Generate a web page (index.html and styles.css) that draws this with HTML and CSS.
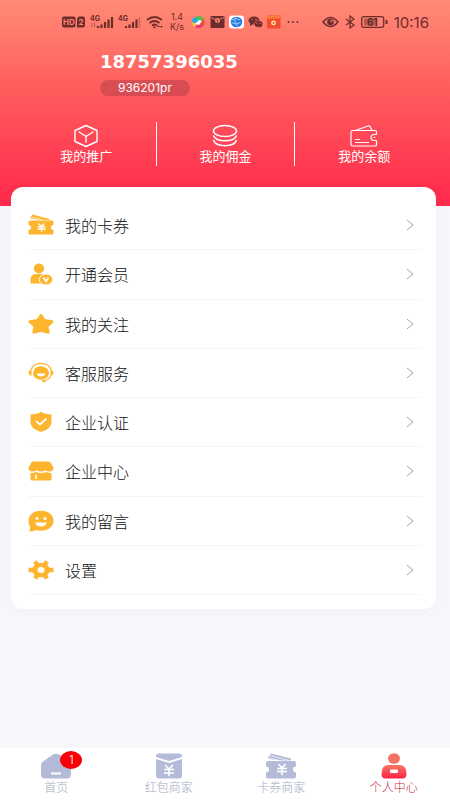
FILE: index.html
```html
<!DOCTYPE html>
<html lang="zh-CN">
<head>
<meta charset="utf-8">
<meta name="viewport" content="width=device-width, initial-scale=1">
<title>个人中心</title>
<link rel="stylesheet" href="styles.css">
</head>
<body>
<header class="header">
  <div class="status">
    <div class="status-left">
      <svg width="24" height="16" viewBox="0 0 24 16"><rect x="0" y="2.500" width="13.500" height="11" rx="2" fill="#6d2d2b"/><path d="M15 4.500l2-2h4q2 0 2 2v7q0 2-2 2h-6z" fill="#6d2d2b"/><text x="1" y="11" font-size="8" font-weight="700" fill="#ff8272">HD</text><text x="16.500" y="11" font-size="8" font-weight="700" fill="#ff8272">2</text></svg>
      <svg width="24" height="16" viewBox="0 0 24 16"><text x="0" y="7" font-size="7" font-weight="700" fill="#6d2d2b">4G</text><path d="M8 14v-2M11.500 14v-3.500M15 14V8M18.500 14V5.500M22 14V3" stroke="#6d2d2b" stroke-width="2.200"/><path d="M2 9v4M4.500 9v4" stroke="#b85850"/></svg>
      <svg width="24" height="16" viewBox="0 0 24 16"><text x="0" y="7" font-size="7" font-weight="700" fill="#6d2d2b">4G</text><path d="M8 14v-2M11.500 14v-3.500M15 14V8M18.500 14V5.500" stroke="#6d2d2b" stroke-width="2.200"/><path d="M21.500 14V3" stroke="#c96459" stroke-width="1.500"/></svg>
      <svg width="17" height="16" viewBox="0 0 17 16"><path d="M1 6Q8.500 0 16 6M3.500 9q5-4 10 0M6 11.500q2.500-2 5 0" fill="none" stroke="#6d2d2b" stroke-width="1.700"/><path d="M6.500 12.500h4l-2 2zM11 13l1.500-2 1.500 2zM14 12h3l-1.500 2z" fill="#6d2d2b"/></svg>
      <span class="speed">1.4<br>K/s</span>
      <svg width="15" height="15" viewBox="0 0 15 15"><path d="M1 7q-1-4 4-5l4 2-4 5z" fill="#2aa9df"/><path d="M5 2q5-3 8 2l-1 4-5-3z" fill="#51be48"/><path d="M13 4q2 5-2 8l-3-1 2-5z" fill="#f04a3d"/><path d="M12 11q-4 4-8 1l1-3 5 1z" fill="#e83c70"/><path d="M4 12q-3-2-3-5l5 2z" fill="#ffc629"/><path d="M4 9l4-4 3 1-3 4z" fill="#fff"/></svg>
      <svg width="15" height="14" viewBox="0 0 15 14"><rect x=".5" y="1" width="14" height="12" rx="1" fill="#6d2d2b"/><path d="M1 2.500q6 4 13 0" fill="none" stroke="#f97d6f"/><circle cx="7.500" cy="5.500" r="2.500" fill="#f97d6f"/><path d="M6.500 4.500l1 1 1-1M7.500 5.500v2" fill="none" stroke="#6d2d2b" stroke-width=".8"/></svg>
      <svg width="15" height="14" viewBox="0 0 15 14"><rect y=".5" width="15" height="13" rx="3" fill="#fff"/><ellipse cx="7.500" cy="7" rx="5.800" ry="5.200" fill="#2979df"/><path d="M3 5q4-3 8 0M2.500 7.500q4 3 9 0M7 2.500q-3 4 2 9" fill="none" stroke="#a8d3ff" stroke-width=".9"/></svg>
      <svg width="15" height="14" viewBox="0 0 15 14"><ellipse cx="6" cy="5.500" rx="5.500" ry="4" fill="#6d2d2b"/><path d="M2 8v3l3-2z" fill="#6d2d2b"/><ellipse cx="10.500" cy="9" rx="4.300" ry="3.300" fill="#6d2d2b" stroke="#ff7d6e" stroke-width=".6"/><path d="M11 11l2 2V10z" fill="#6d2d2b"/><g fill="#ff7d6e"><circle cx="4" cy="4.500" r=".7"/><circle cx="8" cy="4.500" r=".7"/><circle cx="9" cy="8.300" r=".6"/><circle cx="12" cy="8.300" r=".6"/></g></svg>
      <svg width="14" height="14" viewBox="0 0 14 14"><rect y=".5" width="13.500" height="13" rx="1" fill="#f34b2e"/><path d="M0 .5h13.500v3H0z" fill="#ff7b38"/><circle cx="6.500" cy="8" r="1.700" fill="none" stroke="#ffe2a0" stroke-width="1.500"/></svg>
      <svg class="dots" width="12" height="4" viewBox="0 0 12 4"><g fill="#6d2d2b"><circle cx="1.500" cy="2" r="1"/><circle cx="6" cy="2" r="1"/><circle cx="10.500" cy="2" r="1"/></g></svg>
    </div>
    <div class="status-right">
      <svg width="17" height="12" viewBox="0 0 17 12"><path d="M1 6q7.500-9 15 0-7.500 9-15 0z" fill="none" stroke="#6d2d2b" stroke-width="1.500"/><circle cx="8.500" cy="6" r="3.300" fill="#6d2d2b"/><circle cx="9.500" cy="5" r="1" fill="#ff8877"/></svg>
      <svg width="10" height="14" viewBox="0 0 10 14"><path d="M1 4l8 6-4 3V1l4 3-8 6" fill="none" stroke="#6d2d2b" stroke-width="1.200"/></svg>
      <svg width="27" height="12" viewBox="0 0 27 12"><rect x=".7" y=".7" width="22" height="10.600" rx="2" fill="none" stroke="#6d2d2b" stroke-width="1.300"/><rect x="3" y="2.500" width="12" height="7" fill="#b75a52"/><path d="M25.500 4v4" stroke="#6d2d2b" stroke-width="2"/><text x="6" y="9.500" font-size="10" font-weight="600" fill="#5a2422">61</text></svg>
      <time class="clock">10:16</time>
    </div>
  </div>
  <section class="profile">
    <h1 class="phone">18757396035</h1>
    <span class="code">936201pr</span>
  </section>
  <nav class="stats">
    <a class="stat" href="#"><svg width="26" height="24" viewBox="0 0 26 24"><path d="M13 1.500l11 5v11l-11 5-11-5v-11zM6 8l7 4.500L20 8M13 12.500V18" fill="none" stroke="#fff" stroke-width="1.400" stroke-linejoin="round" stroke-linecap="round"/></svg>我的推广</a>
    <a class="stat" href="#"><svg width="26" height="24" viewBox="0 0 26 24"><g fill="none" stroke="#fff" stroke-width="1.500"><ellipse cx="13" cy="7" rx="11.500" ry="5.500"/><path d="M1.500 11.500c2 7 21 7 23 0M1.500 16c2 7.500 21 7.500 23 0"/></g></svg>我的佣金</a>
    <a class="stat" href="#"><svg width="28" height="24" viewBox="0 0 28 24"><g fill="none" stroke="#fff" stroke-width="1.200" stroke-linejoin="round"><path d="M26.500 10.500V7.500Q26.500 6.500 25 6.500H2.500Q1 6.500 1 8v12.500Q1 22 2.500 22H25q1.500 0 1.500-1v-4.500M26.500 10.500H24a3 3 0 0 0 0 6h2.500M5 6.500l13-4.500q1.500-.5 2 .5l2 4M5 15.500h5M5 18.500h14"/></g><circle cx="24.500" cy="13.500" r=".8" fill="#fff"/></svg>我的余额</a>
  </nav>
</header>
<main class="card">
  <a class="row" href="#"><svg class="icon" viewBox="0 0 26 22"><path d="M2.500 4.500V3L4.500.5l17 4.500v1H13zM1 6.500h23q1.500 0 1.500 1.500v3a2.500 2.500 0 0 0 0 5v3q0 1.500-1.500 1.500H2Q.5 20.500.5 19v-3a2.500 2.500 0 0 0 0-5V8q0-1.500 1.500-1.500z" fill="#fdb52f"/><path d="M3 3l12 3" stroke="#fff" stroke-width=".6"/><path d="M10.500 9.500l3 3 3-3M9.500 12.800h8M9.500 15h8M13.500 12.500v5" fill="none" stroke="#fff" stroke-width="1.300"/></svg><span>我的卡券</span><svg class="arrow" viewBox="0 0 10 12"><path d="M2 1l6 5-6 5"/></svg></a>
  <a class="row" href="#"><svg class="icon" viewBox="0 0 26 22"><ellipse cx="11" cy="5.500" rx="5.200" ry="5" fill="#fdb52f"/><path d="M2.500 20.500v-4q0-5.500 6-5.500h5q5 0 6 4v5.500z" fill="#fdb52f"/><ellipse cx="18" cy="16.500" rx="6.800" ry="5.500" fill="#fdb52f" stroke="#fff"/><path d="M15.500 14.500l2.500 4 2.500-4" fill="none" stroke="#fff" stroke-width="1.500"/></svg><span>开通会员</span><svg class="arrow" viewBox="0 0 10 12"><path d="M2 1l6 5-6 5"/></svg></a>
  <a class="row" href="#"><svg class="icon" viewBox="0 0 26 22"><path d="M13 2.500l3.500 5 7.500 1.200-5 4.500 1.200 6-7.200-2-7.200 2 1.200-6-5-4.500 7.500-1.200z" fill="#fdb52f" stroke="#fdb52f" stroke-width="3" stroke-linejoin="round"/></svg><span>我的关注</span><svg class="arrow" viewBox="0 0 10 12"><path d="M2 1l6 5-6 5"/></svg></a>
  <a class="row" href="#"><svg class="icon" viewBox="0 0 26 22"><ellipse cx="13" cy="11" rx="8" ry="6.800" fill="#fdb52f"/><path d="M3 8C6-.8 20-.8 23 8M23 13.500Q21 18 15 19" fill="none" stroke="#fdb52f" stroke-width="1.200"/><path d="M3.500 7.500v6.500Q.5 13 .5 10.700t3-3.200zM22.500 7.500v6.500q3-1 3-3.300t-3-3.200z" fill="#fdb52f"/><ellipse cx="16" cy="19" rx="2" ry="1.200" fill="#fdb52f"/><path d="M8.500 11.500h9q-1 3-4.500 3t-4.500-3z" fill="#fff"/></svg><span>客服服务</span><svg class="arrow" viewBox="0 0 10 12"><path d="M2 1l6 5-6 5"/></svg></a>
  <a class="row" href="#"><svg class="icon" viewBox="0 0 26 22"><path d="M13 .8q4 2.700 10.500 2.700V11q0 7-10.500 10Q2.500 18 2.500 11V3.500q6.500 0 10.500-2.700z" fill="#fdb52f"/><path d="M8.500 10.500l3.500 3 6-5.500" fill="none" stroke="#fff" stroke-width="1.800" stroke-linecap="round"/></svg><span>企业认证</span><svg class="arrow" viewBox="0 0 10 12"><path d="M2 1l6 5-6 5"/></svg></a>
  <a class="row" href="#"><svg class="icon" viewBox="0 0 26 22"><path d="M5.500 1.500h15q1.500 0 2.500 1.500l2.500 5q0 3.500-4 3.500-2.500 0-4-1.200-2 1.200-4.500 1.200t-4.500-1.200q-1.500 1.200-4 1.200-4 0-4-3.500l2.500-5q1-1.500 2.500-1.500zM2.500 13q3 0 5.500-1 5 2 10 0 2.500 1 5.500 1v6q0 1.500-1.500 1.500H4q-1.500 0-1.500-1.500z" fill="#fdb52f"/><path d="M8 14.500v4.500" stroke="#fff" stroke-width="1.600"/></svg><span>企业中心</span><svg class="arrow" viewBox="0 0 10 12"><path d="M2 1l6 5-6 5"/></svg></a>
  <a class="row" href="#"><svg class="icon" viewBox="0 0 26 22"><path d="M13 .8c7 0 12.500 4 12.500 10s-5.500 10-12.500 10q-3 0-5-.8-2.500 1.500-7 1.500 1.500-2 1-5-1.500-2-1.500-5.700C.5 4.800 6 .8 13 .8z" fill="#fdb52f"/><path d="M7 12.500h12q-1.500 4-6 4t-6-4z" fill="#fff"/><circle cx="9" cy="8.500" r="1.500" fill="#fff"/><circle cx="17" cy="8.500" r="1.500" fill="#fff"/></svg><span>我的留言</span><svg class="arrow" viewBox="0 0 10 12"><path d="M2 1l6 5-6 5"/></svg></a>
  <a class="row" href="#"><svg class="icon" viewBox="0 0 26 22"><path d="M.5 11h25M7 2.500l12 17M19 2.500l-12 17" stroke="#fdb52f" stroke-width="4.500"/><ellipse cx="13" cy="11" rx="8.800" ry="7.300" fill="#fdb52f"/><ellipse cx="13" cy="11" rx="3.500" ry="3" fill="#fff"/></svg><span>设置</span><svg class="arrow" viewBox="0 0 10 12"><path d="M2 1l6 5-6 5"/></svg></a>
</main>
<nav class="tabs">
  <a class="tab" href="#"><span class="tab-icon"><svg width="32" height="26" viewBox="0 0 32 26"><path d="M13 1.500q3-1.500 6 0l10 7q2 1.500 2 4v9q0 4-4 4H5q-4 0-4-4v-9q0-2.500 2-4z" fill="#b3bbd8"/><path d="M11 20.500h10" stroke="#fff" stroke-width="2"/></svg><span class="badge">1</span></span>首页</a>
  <a class="tab" href="#"><span class="tab-icon"><svg width="28" height="26" viewBox="0 0 28 26"><path d="M1 4V3q0-2.500 3-2.500h20q3 0 3 2.500v1l-13 4zM1 6l13 4 13-4v16.500q0 3-3 3H4q-3 0-3-3z" fill="#b3bbd8"/><path d="M10 12l4 4 4-4M9 16.500h10M9 20h10M14 16v7" fill="none" stroke="#fff" stroke-width="1.600"/></svg></span>红包商家</a>
  <a class="tab" href="#"><span class="tab-icon"><svg width="32" height="26" viewBox="0 0 32 26"><path d="M3 6V4.500L6 .5l20 5v2H17zM3 8h26q2 0 2 2v3.500a3 3 0 0 0 0 6V23q0 2.500-2 2.500H3Q1 25.500 1 23v-3.500a3 3 0 0 0 0-6V10q0-2 2-2z" fill="#b3bbd8"/><path d="M3 5l13 2.800M4.500 2.500L24 7.500" stroke="#fff" stroke-width=".7"/><path d="M13.500 11l3.500 4 3.500-4M12 15.500h10M12 18.500h10M17 15.500V22" fill="none" stroke="#fff" stroke-width="1.700"/></svg></span>卡券商家</a>
  <a class="tab active" href="#"><span class="tab-icon"><svg width="28" height="26" viewBox="0 0 28 26"><defs><linearGradient id="user" x2="0" y2="1"><stop stop-color="#f77563"/><stop offset="1" stop-color="#fb2346"/></linearGradient></defs><ellipse cx="14" cy="5.500" rx="6" ry="5.200" fill="#f37262"/><path d="M1.500 21q0-9 7-9h11q7 0 7 9 0 4.500-4 4.500h-17q-4 0-4-4.500z" fill="url(#user)"/><rect x="10" y="16.500" width="8" height="3.500" rx="1" fill="#fff"/></svg></span>个人中心</a>
</nav>
</body>
</html>
```
FILE: styles.css
```css
* {
  box-sizing: border-box;
}

body {
  display: flex;
  flex-direction: column;
  min-height: 100vh;
  margin: 0;
  background: #f6f6fb;
  color: #111;
  font-family: Inter, "Noto Sans CJK SC", sans-serif;
}

a {
  color: inherit;
  text-decoration: none;
}

svg {
  display: block;
  flex: none;
}

.header {
  padding-bottom: 40px;
  background: linear-gradient(#ff8b76, #ff5e5e 42%, #ff284b);
  color: #fff;
}

.status {
  display: flex;
  justify-content: space-between;
  align-items: center;
  height: 44px;
  padding: 0 21px 0 62px;
  color: #6d2d2b;
}

.status-left,
.status-right {
  display: flex;
  align-items: center;
  gap: 4px;
}

.status-right {
  gap: 6px;
}

.speed {
  width: 20px;
  font-size: 9px;
  line-height: 10px;
  text-align: center;
}

.dots {
  margin-left: 2px;
}

.clock {
  font-size: 15px;
}

.profile {
  display: flex;
  flex-direction: column;
  align-items: flex-start;
  gap: 6px;
  padding: 6px 0 0 100px;
}

.phone {
  margin: 0;
  font-family: "DejaVu Sans", sans-serif;
  font-size: 18px;
  line-height: 24px;
}

.code {
  padding: 0 18px;
  border-radius: 8px;
  background: rgba(190, 65, 75, 0.6);
  font-size: 12px;
  line-height: 16px;
}

.stats {
  display: grid;
  grid-template-columns: repeat(3, 1fr);
  margin-top: 26px;
  padding: 0 17px;
}

.stat {
  display: flex;
  flex-direction: column;
  align-items: center;
  justify-content: center;
  height: 44px;
  font-size: 13px;
  line-height: 16px;
}

.stat + .stat {
  border-left: 1px solid #fff;
}

.card {
  display: grid;
  grid-auto-rows: 1fr;
  min-height: 422px;
  margin: -19px 14px 0 11px;
  padding: 14px 15px 14px 17px;
  border-radius: 12px;
  background: #fff;
  box-shadow: 0 0 8px rgba(80, 80, 140, 0.04);
}

.row {
  display: flex;
  align-items: center;
  gap: 11px;
  border-bottom: 1px solid #f5f5f6;
  font-size: 16px;
  font-weight: 300;
}

.icon {
  width: 26px;
  height: 22px;
}

.arrow {
  width: 10px;
  height: 12px;
  margin: 0 6px 0 auto;
  fill: none;
  stroke: #a3a3a3;
}

.tabs {
  display: grid;
  grid-template-columns: repeat(4, 1fr);
  margin-top: auto;
  padding: 5px 0 3px;
  background: #fff;
}

.tab {
  display: flex;
  flex-direction: column;
  align-items: center;
  color: #a4aac0;
  font-size: 12px;
  font-weight: 300;
  line-height: 18px;
}

.active {
  color: #c71f45;
}

.tab-icon {
  position: relative;
}

.badge {
  position: absolute;
  top: -2px;
  left: 20px;
  width: 22px;
  border-radius: 50%;
  background: #f80008;
  color: #fff;
  font-size: 12px;
  text-align: center;
}
```
